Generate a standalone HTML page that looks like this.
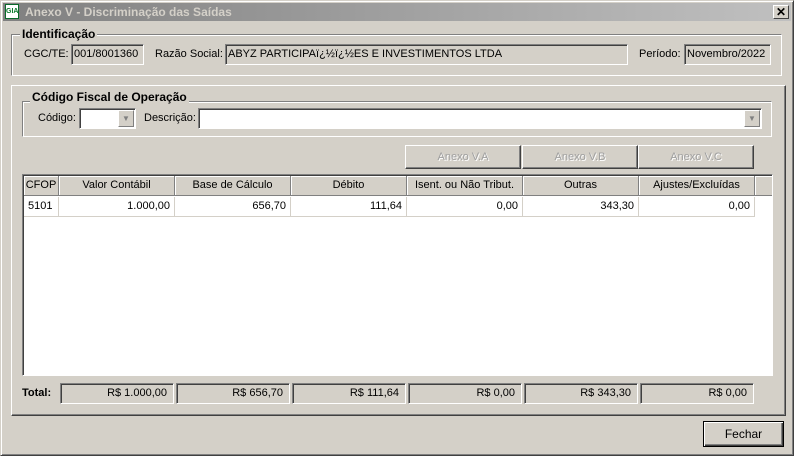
<!DOCTYPE html>
<html><head><meta charset="utf-8"><style>
*{box-sizing:border-box;margin:0;padding:0}
body{width:794px;height:456px;background:#d4d0c8;font-family:"Liberation Sans",Tahoma,sans-serif;font-size:11px;color:#000;position:relative;overflow:hidden}
.a{position:absolute}
.win{left:0;top:0;width:794px;height:456px;border:1px solid;border-color:#d4d0c8 #404040 #404040 #d4d0c8;box-shadow:inset 1px 1px #fff,inset -1px -1px #808080}
.title{left:3px;top:3px;width:788px;height:18px;background:linear-gradient(90deg,#808080,#c0c0c0);color:#d4d0c8;font-weight:bold;font-size:12px;line-height:18px;padding-left:22px}
.sunk{border:1px solid;border-color:#808080 #fff #fff #808080}
.fld{border:1px solid;border-color:#808080 #fff #fff #808080;box-shadow:inset 1px 1px #404040;background:#d4d0c8;line-height:18px;padding-left:2px;white-space:nowrap;overflow:hidden}
.grp{border:1px solid;border-color:#808080 #fff #fff #808080;box-shadow:inset 1px 1px #fff,1px 1px #808080 inset}
.grp2{border:1px solid #808080;box-shadow:1px 1px #fff,inset 1px 1px #fff}
.lg{background:#d4d0c8;font-weight:bold;padding:0 2px;font-size:12px}
.btn{border:1px solid;border-color:#fff #404040 #404040 #fff;box-shadow:inset -1px -1px #808080;text-align:center;color:#a0a0a0;line-height:22px;text-shadow:1px 1px #fff}
.grid{background:#fff;border:1px solid;border-color:#808080 #fff #fff #808080;box-shadow:inset 1px 1px #404040}
.h{background:#d4d0c8;border-right:1px solid #808080;border-bottom:1px solid #808080;box-shadow:inset 1px 1px #fff;text-align:center;line-height:19px;height:20px;top:2px}
.c{border-right:1px solid #d4d0c8;border-bottom:1px solid #d4d0c8;text-align:right;padding-right:4px;line-height:19px;height:20px;top:22px}
.t{text-align:right;padding-right:6px;line-height:18px;height:21px;border:1px solid;border-color:#808080 #fff #fff #808080;box-shadow:inset 1px 1px #404040}
</style></head><body>
<div class="a win"></div>
<div class="a title">Anexo V - Discriminação das Saídas</div>
<div class="a" style="left:5px;top:4px;width:14px;height:15px;background:#fff;border:1px solid #0a6a2a;font-size:7px;font-weight:bold;color:#0a7a2a;line-height:13px;text-align:center">GIA</div>
<div class="a" style="left:773px;top:5px;width:16px;height:14px;background:#d4d0c8;border:1px solid;border-color:#fff #404040 #404040 #fff;font-weight:bold;font-size:12px;line-height:12px;text-align:center">✕</div>

<div class="a grp" style="left:11px;top:34px;width:771px;height:42px"></div>
<div class="a lg" style="left:20px;top:27px">Identificação</div>
<div class="a" style="left:24px;top:48px">CGC/TE:</div>
<div class="a fld" style="left:71px;top:44px;width:73px;height:21px">001/8001360</div>
<div class="a" style="left:155px;top:48px">Razão Social:</div>
<div class="a fld" style="left:225px;top:44px;width:403px;height:21px">ABYZ PARTICIPAï¿½ï¿½ES E INVESTIMENTOS LTDA</div>
<div class="a" style="left:639px;top:48px">Período:</div>
<div class="a fld" style="left:684px;top:44px;width:87px;height:21px">Novembro/2022</div>

<div class="a" style="left:11px;top:85px;width:775px;height:331px;border:1px solid;border-color:#fff #404040 #404040 #fff;box-shadow:inset -1px -1px #808080"></div>

<div class="a grp" style="left:22px;top:101px;width:750px;height:36px"></div>
<div class="a lg" style="left:30px;top:90px">Código Fiscal de Operação</div>
<div class="a" style="left:38px;top:112px">Código:</div>
<div class="a fld" style="left:79px;top:108px;width:57px;height:21px;background:#fff"></div>
<div class="a" style="left:118px;top:110px;width:16px;height:17px;background:#d4d0c8;border:1px solid;border-color:#fff #808080 #808080 #fff;color:#808080;font-size:8px;text-align:center;line-height:15px">▼</div>
<div class="a" style="left:144px;top:112px">Descrição:</div>
<div class="a fld" style="left:198px;top:108px;width:564px;height:21px;background:#fff"></div>
<div class="a" style="left:744px;top:110px;width:16px;height:17px;background:#d4d0c8;border:1px solid;border-color:#fff #808080 #808080 #fff;color:#808080;font-size:8px;text-align:center;line-height:15px">▼</div>

<div class="a btn" style="left:405px;top:145px;width:116px;height:24px">Anexo V.A</div>
<div class="a btn" style="left:522px;top:145px;width:116px;height:24px">Anexo V.B</div>
<div class="a btn" style="left:638px;top:145px;width:116px;height:24px">Anexo V.C</div>

<div class="a grid" style="left:22px;top:174px;width:751px;height:202px">
<div class="a h" style="left:1px;width:35px;top:1px">CFOP</div>
<div class="a h" style="left:36px;width:116px;top:1px">Valor Contábil</div>
<div class="a h" style="left:152px;width:116px;top:1px">Base de Cálculo</div>
<div class="a h" style="left:268px;width:116px;top:1px">Débito</div>
<div class="a h" style="left:384px;width:116px;top:1px">Isent. ou Não Tribut.</div>
<div class="a h" style="left:500px;width:116px;top:1px">Outras</div>
<div class="a h" style="left:616px;width:116px;top:1px">Ajustes/Excluídas</div>
<div class="a h" style="left:732px;width:17px;top:1px;border-right:none"></div>
<div class="a c" style="left:1px;width:35px;text-align:left;padding-left:4px">5101</div>
<div class="a c" style="left:36px;width:116px">1.000,00</div>
<div class="a c" style="left:152px;width:116px">656,70</div>
<div class="a c" style="left:268px;width:116px">111,64</div>
<div class="a c" style="left:384px;width:116px">0,00</div>
<div class="a c" style="left:500px;width:116px">343,30</div>
<div class="a c" style="left:616px;width:116px">0,00</div>
</div>

<div class="a" style="left:22px;top:387px;font-weight:bold">Total:</div>
<div class="a t" style="left:60px;top:383px;width:114px">R$ 1.000,00</div>
<div class="a t" style="left:176px;top:383px;width:114px">R$ 656,70</div>
<div class="a t" style="left:292px;top:383px;width:114px">R$ 111,64</div>
<div class="a t" style="left:408px;top:383px;width:114px">R$ 0,00</div>
<div class="a t" style="left:524px;top:383px;width:114px">R$ 343,30</div>
<div class="a t" style="left:640px;top:383px;width:114px">R$ 0,00</div>

<div class="a" style="left:703px;top:421px;width:81px;height:26px;border:1px solid #000;box-shadow:inset 1px 1px #fff,inset -1px -1px #404040,inset -2px -2px #808080;text-align:center;line-height:24px;font-size:12px">Fechar</div>
</body></html>
